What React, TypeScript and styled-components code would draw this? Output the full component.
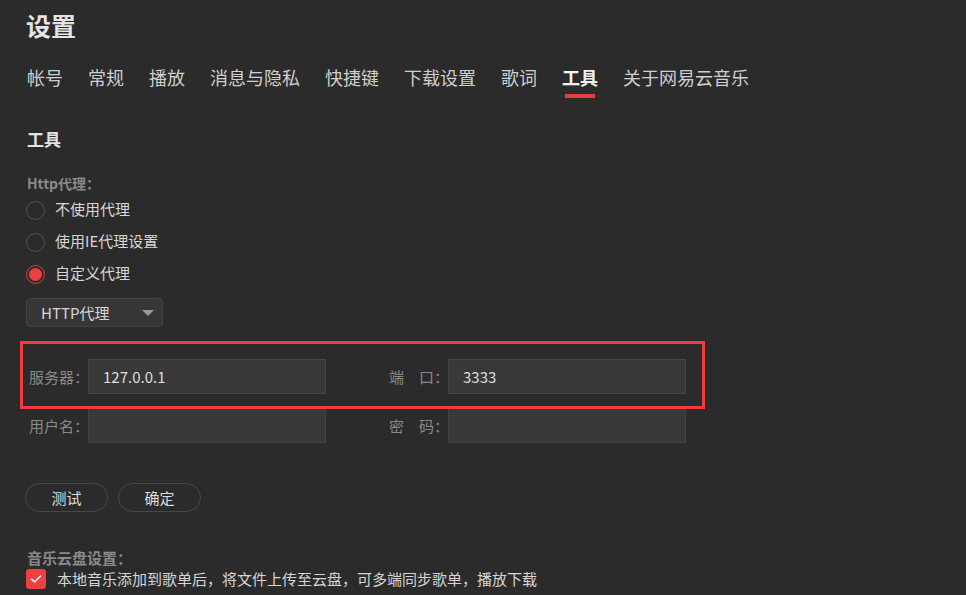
import styled, { createGlobalStyle } from 'styled-components';

const GlobalStyle = createGlobalStyle`
  html, body {
    margin: 0;
    padding: 0;
    background: #2b2b2b;
  }
  body {
    font-family: "Noto Sans CJK SC", "Liberation Sans", sans-serif;
    color: #d6d6d6;
  }
`;

const tabs = ['帐号', '常规', '播放', '消息与隐私', '快捷键', '下载设置', '歌词', '工具', '关于网易云音乐'];

const radios = [
  { label: '不使用代理', checked: false },
  { label: '使用IE代理设置', checked: false },
  { label: '自定义代理', checked: true },
];

const App = () => {
  return (
    <Page>
      <GlobalStyle />
      <Title>设置</Title>
      <TabBar>
        {tabs.map((t) => (
          <Tab key={t}>
            <TabText $active={t === '工具'}>{t}</TabText>
            <TabLine $active={t === '工具'} />
          </Tab>
        ))}
      </TabBar>

      <SectionTitle>工具</SectionTitle>

      <GroupLabel>Http代理：</GroupLabel>
      <RadioList>
        {radios.map((r) => (
          <RadioRow key={r.label}>
            <RadioCircle $checked={r.checked} />
            <RadioText>{r.label}</RadioText>
          </RadioRow>
        ))}
      </RadioList>

      <Select>
        <span>HTTP代理</span>
        <Caret />
      </Select>

      <Form>
        <Highlight />
        <FieldRow>
          <Field>
            <FieldLabel>服务器：</FieldLabel>
            <Input>127.0.0.1</Input>
          </Field>
          <Field>
            <FieldLabel>端　口：</FieldLabel>
            <Input>3333</Input>
          </Field>
        </FieldRow>
        <FieldRow>
          <Field>
            <FieldLabel>用户名：</FieldLabel>
            <Input />
          </Field>
          <Field>
            <FieldLabel>密　码：</FieldLabel>
            <Input />
          </Field>
        </FieldRow>
      </Form>

      <Buttons>
        <PillButton>测试</PillButton>
        <PillButton>确定</PillButton>
      </Buttons>

      <CloudLabel>音乐云盘设置：</CloudLabel>
      <CheckRow>
        <CheckBox>
          <svg width="12" height="10" viewBox="0 0 12 10">
            <path d="M1.5 5.2 L4.6 8 L10.5 2" fill="none" stroke="#fff" strokeWidth="1.6" strokeLinecap="round" strokeLinejoin="round" />
          </svg>
        </CheckBox>
        <CheckText>本地音乐添加到歌单后，将文件上传至云盘，可多端同步歌单，播放下载</CheckText>
      </CheckRow>
    </Page>
  );
};

const Page = styled.div`
  width: 966px;
  height: 595px;
  overflow: hidden;
  box-sizing: border-box;
  padding-left: 26px;
`;

const Title = styled.h1`
  margin: 0;
  height: 52px;
  line-height: 50px;
  font-size: 25px;
  font-weight: 700;
  color: #e4e4e4;
`;

const TabBar = styled.div`
  display: flex;
  gap: 25px;
  margin-top: 14px;
  padding-left: 1px;
`;

const Tab = styled.div`
  display: flex;
  flex-direction: column;
  align-items: center;
`;

const TabText = styled.span<{ $active?: boolean }>`
  font-size: 18px;
  line-height: 23px;
  color: ${(p) => (p.$active ? '#f2f2f2' : '#cfcfcf')};
  font-weight: ${(p) => (p.$active ? 700 : 400)};
`;

const TabLine = styled.div<{ $active?: boolean }>`
  width: 30px;
  height: 4px;
  margin-top: 5px;
  background: ${(p) => (p.$active ? '#e33e3e' : 'transparent')};
`;

const SectionTitle = styled.h2`
  margin: 30px 0 0 1px;
  font-size: 17px;
  line-height: 22px;
  font-weight: 700;
  color: #e4e4e4;
`;

const GroupLabel = styled.div`
  margin: 23px 0 0 1px;
  font-size: 14px;
  line-height: 20px;
  font-weight: 700;
  color: #8a8a8a;
`;

const RadioList = styled.div`
  margin-top: 1px;
  display: flex;
  flex-direction: column;
`;

const RadioRow = styled.div`
  height: 32px;
  display: flex;
  align-items: center;
  gap: 10px;
`;

const RadioCircle = styled.span<{ $checked?: boolean }>`
  box-sizing: border-box;
  width: 19px;
  height: 19px;
  border-radius: 50%;
  border: 1px solid ${(p) => (p.$checked ? '#e03b3b' : '#555')};
  display: flex;
  align-items: center;
  justify-content: center;
  &::after {
    content: '';
    width: 13px;
    height: 13px;
    border-radius: 50%;
    background: ${(p) => (p.$checked ? '#ec4141' : 'transparent')};
  }
`;

const RadioText = styled.span`
  font-size: 15px;
  line-height: 20px;
  margin-top: -3px;
  color: #d6d6d6;
`;

const Select = styled.div`
  box-sizing: border-box;
  margin-top: 8px;
  width: 137px;
  height: 29px;
  padding: 0 8px 0 14px;
  display: flex;
  align-items: center;
  justify-content: space-between;
  background: #363636;
  border: 1px solid #424242;
  border-radius: 4px;
  font-size: 15px;
  color: #d6d6d6;
`;

const Caret = styled.span`
  width: 0;
  height: 0;
  border-left: 6px solid transparent;
  border-right: 6px solid transparent;
  border-top: 6px solid #9a9a9a;
`;

const Form = styled.div`
  position: relative;
  margin-top: 32px;
  display: flex;
  flex-direction: column;
  gap: 14px;
`;

const Highlight = styled.div`
  position: absolute;
  left: -6px;
  top: -18px;
  width: 685px;
  height: 68px;
  box-sizing: border-box;
  border: 3px solid #f43b3b;
  pointer-events: none;
`;

const FieldRow = styled.div`
  display: flex;
  gap: 63px;
  padding-left: 3px;
`;

const Field = styled.div`
  display: flex;
  align-items: center;
`;

const FieldLabel = styled.span`
  width: 59px;
  font-size: 15px;
  color: #8a8a8a;
  white-space: nowrap;
`;

const Input = styled.div`
  box-sizing: border-box;
  width: 238px;
  height: 35px;
  padding-left: 14px;
  display: flex;
  align-items: center;
  background: #393939;
  border: 1px solid #444;
  font-size: 15px;
  color: #dedede;
`;

const Buttons = styled.div`
  margin-top: 40px;
  display: flex;
  gap: 10px;
  margin-left: -1px;
`;

const PillButton = styled.button`
  box-sizing: border-box;
  width: 83px;
  height: 29px;
  border-radius: 15px;
  border: 1px solid #474747;
  background: transparent;
  color: #dedede;
  font-family: inherit;
  font-size: 15px;
  padding: 0;
`;

const CloudLabel = styled.div`
  margin: 36px 0 0 1px;
  font-size: 15px;
  line-height: 20px;
  font-weight: 700;
  color: #8a8a8a;
`;

const CheckRow = styled.div`
  height: 22px;
  display: flex;
  align-items: center;
  gap: 11px;
`;

const CheckBox = styled.span`
  width: 20px;
  height: 20px;
  border-radius: 3px;
  background: #ec4141;
  display: flex;
  align-items: center;
  justify-content: center;
`;

const CheckText = styled.span`
  font-size: 15px;
  line-height: 20px;
  color: #d6d6d6;
`;

export default App;
